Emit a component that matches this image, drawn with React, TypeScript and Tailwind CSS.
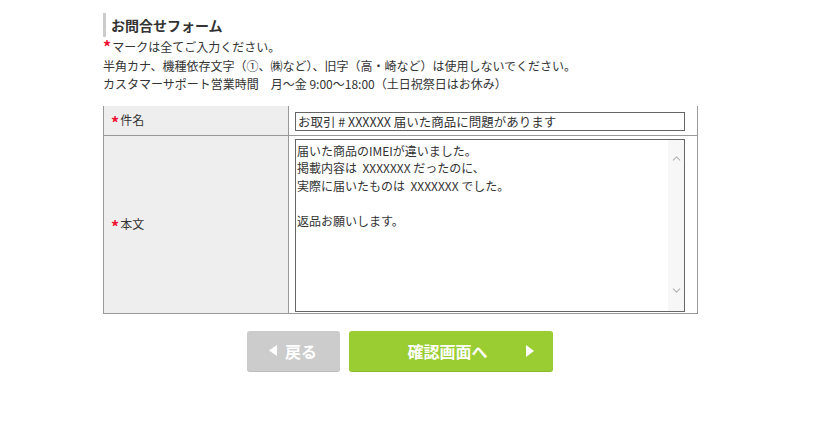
import { ChevronUp, ChevronDown } from 'lucide-react';

const font = { fontFamily: '"Noto Sans CJK JP", "Noto Sans", sans-serif' };

function Req() {
  return <span className="inline-block h-[12px] text-[#ee1133] text-[16px] font-bold leading-[16px] align-top mr-[1px]">*</span>;
}

export default function App() {
  return (
    <div className="w-[813px] h-[435px] bg-white text-[#333]" style={font}>
      <div className="ml-[103px] w-[595px] pt-[13px]">
        {/* Heading */}
        <div className="h-[24px] border-l-[3px] border-[#cccccc] pl-[5px] flex items-center text-[14px] font-bold text-[#333]">
          お問合せフォーム
        </div>

        {/* Notes */}
        <div className="mt-[1px] text-[12px] leading-[18.5px]">
          <p><Req />マークは全てご入力ください。</p>
          <p>半角カナ、機種依存文字（①、㈱など）、旧字（高・崎など）は使用しないでください。</p>
          <p>カスタマーサポート営業時間　月～金 9:00～18:00（土日祝祭日はお休み）</p>
        </div>

        {/* Form table */}
        <div className="mt-[12px] grid grid-cols-[185px_1fr] border-x border-b border-[#999999] text-[12px]">
          <div className="h-[30px] bg-[#eeeeee] border-r border-b border-[#999999] pl-[7px] flex items-center">
            <Req />件名
          </div>
          <div className="h-[30px] border-b border-[#999999] pl-[6px] pt-[6px]">
            <div className="w-[390px] h-[19px] border border-[#666666] px-[2px] text-[12.5px] leading-[17px] whitespace-nowrap overflow-hidden">
              お取引 # XXXXXX 届いた商品に問題があります
            </div>
          </div>

          <div className="h-[177px] bg-[#eeeeee] border-r border-[#999999] pl-[7px] flex items-center">
            <Req />本文
          </div>
          <div className="h-[177px] pl-[6px] pt-[3px]">
            <div className="w-[390px] h-[173px] border border-[#666666] flex">
              <div className="flex-1 px-[1px] pt-[2px] text-[12px] leading-[17.5px] whitespace-pre">
                {'届いた商品のIMEIが違いました。\n掲載内容は  XXXXXXX だったのに、\n実際に届いたものは  XXXXXXX でした。\n\n返品お願いします。'}
              </div>
              <div className="w-[16px] bg-[#f7f7f7] flex flex-col items-center justify-between pt-[12px] pb-[14px]">
                <ChevronUp size={13} strokeWidth={2} className="text-[#b4b4b4]" />
                <ChevronDown size={13} strokeWidth={2} className="text-[#b4b4b4]" />
              </div>
            </div>
          </div>
        </div>

        {/* Buttons */}
        <div className="mt-[17px] flex justify-center gap-[9px] pr-[2px]">
          <button className="w-[93px] h-[40px] rounded-[3px] bg-[#cccccc] shadow-[0_1px_0_#bdbdbd] text-white text-[16px] font-bold flex items-center justify-center gap-[8px]">
            <svg width="8" height="11" viewBox="0 0 8 11"><path d="M8 0 L0 5.5 L8 11 Z" fill="white" /></svg>
            戻る
          </button>
          <button className="relative w-[204px] h-[40px] rounded-[3px] bg-[#9acd32] shadow-[0_1px_0_#8cbc2c] text-white text-[16px] font-bold flex items-center justify-center">
            <span className="mr-[6px]">確認画面へ</span>
            <svg className="absolute right-[19px] top-[14px]" width="8" height="12" viewBox="0 0 8 12"><path d="M0 0 L8 6 L0 12 Z" fill="white" /></svg>
          </button>
        </div>
      </div>
    </div>
  );
}
